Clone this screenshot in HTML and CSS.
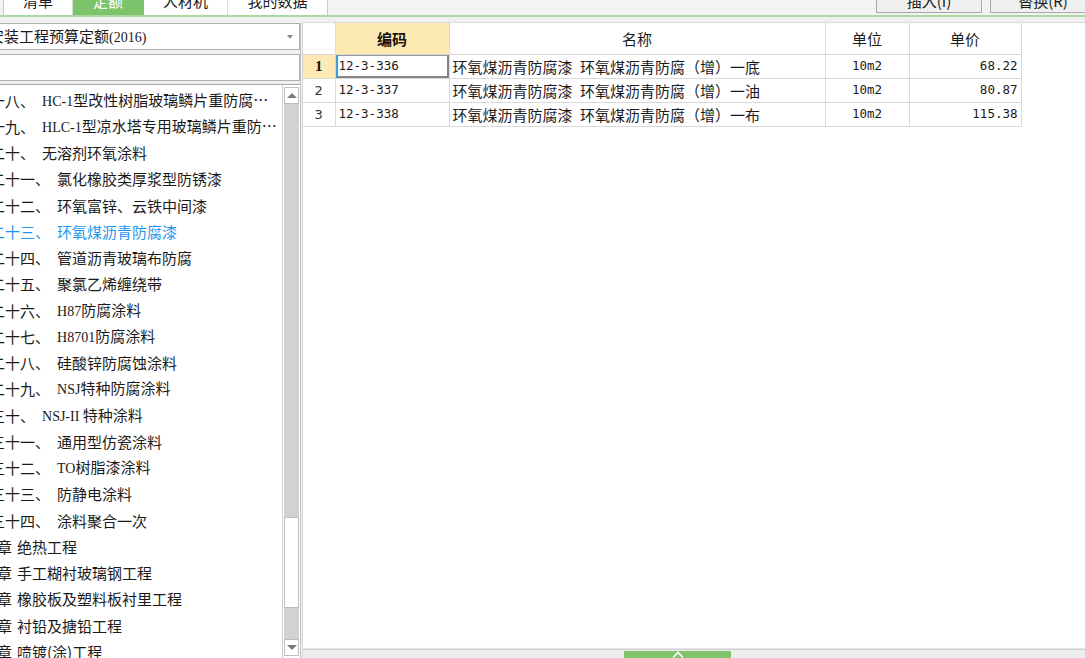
FILE: index.html
```html
<!DOCTYPE html>
<html lang="zh">
<head>
<meta charset="utf-8">
<title>定额</title>
<link rel="stylesheet" href="styles.css">
</head>
<body>
<div class="app">
  <div class="topbar">
    <div class="tabs">
      <div class="tab t1">清单</div>
      <div class="tab t2 active">定额</div>
      <div class="tab t3">人材机</div>
      <div class="tab t4">我的数据</div>
    </div>
    <div class="actions">
      <button class="btn">插入(I)</button>
      <button class="btn">替换(R)</button>
    </div>
  </div>
  <div class="main">
    <div class="left">
      <div class="combo"><span class="combo-text">安装工程预算定额<span class="lat">(2016)</span></span><span class="caret"></span></div>
      <div class="search"></div>
      <div class="tree">
        <div class="tree-list">
          <div class="tree-scroll">
            <div class="node sub"><span class="no">十八、</span><span class="nm"><span class="lat">HC-1</span>型改性树脂玻璃鳞片重防腐…</span></div>
            <div class="node sub"><span class="no">十九、</span><span class="nm"><span class="lat">HLC-1</span>型凉水塔专用玻璃鳞片重防…</span></div>
            <div class="node sub"><span class="no">二十、</span><span class="nm">无溶剂环氧涂料</span></div>
            <div class="node sub"><span class="no">二十一、</span><span class="nm">氯化橡胶类厚浆型防锈漆</span></div>
            <div class="node sub"><span class="no">二十二、</span><span class="nm">环氧富锌、云铁中间漆</span></div>
            <div class="node sub current"><span class="no">二十三、</span><span class="nm">环氧煤沥青防腐漆</span></div>
            <div class="node sub"><span class="no">二十四、</span><span class="nm">管道沥青玻璃布防腐</span></div>
            <div class="node sub"><span class="no">二十五、</span><span class="nm">聚氯乙烯缠绕带</span></div>
            <div class="node sub"><span class="no">二十六、</span><span class="nm"><span class="lat">H87</span>防腐涂料</span></div>
            <div class="node sub"><span class="no">二十七、</span><span class="nm"><span class="lat">H8701</span>防腐涂料</span></div>
            <div class="node sub"><span class="no">二十八、</span><span class="nm">硅酸锌防腐蚀涂料</span></div>
            <div class="node sub"><span class="no">二十九、</span><span class="nm"><span class="lat">NSJ</span>特种防腐涂料</span></div>
            <div class="node sub"><span class="no">三十、</span><span class="nm"><span class="lat">NSJ-II</span> 特种涂料</span></div>
            <div class="node sub"><span class="no">三十一、</span><span class="nm">通用型仿瓷涂料</span></div>
            <div class="node sub"><span class="no">三十二、</span><span class="nm"><span class="lat">TO</span>树脂漆涂料</span></div>
            <div class="node sub"><span class="no">三十三、</span><span class="nm">防静电涂料</span></div>
            <div class="node sub"><span class="no">三十四、</span><span class="nm">涂料聚合一次</span></div>
            <div class="node chap"><span class="no">第四章</span><span class="nm">绝热工程</span></div>
            <div class="node chap"><span class="no">第五章</span><span class="nm">手工糊衬玻璃钢工程</span></div>
            <div class="node chap"><span class="no">第六章</span><span class="nm">橡胶板及塑料板衬里工程</span></div>
            <div class="node chap"><span class="no">第七章</span><span class="nm">衬铅及搪铅工程</span></div>
            <div class="node chap"><span class="no">第八章</span><span class="nm">喷镀(涂)工程</span></div>
          </div>
        </div>
        <div class="vscroll">
          <div class="sbtn"><span class="tri up"></span></div>
          <div class="track top"></div>
          <div class="thumb"></div>
          <div class="track rest"></div>
          <div class="sbtn"><span class="tri down"></span></div>
        </div>
      </div>
    </div>
    <div class="right">
      <table class="grid">
        <colgroup>
          <col class="c-no"><col class="c-code"><col class="c-name"><col class="c-unit"><col class="c-price">
        </colgroup>
        <thead>
          <tr>
            <th></th>
            <th class="h-code">编码</th>
            <th>名称</th>
            <th>单位</th>
            <th>单价</th>
          </tr>
        </thead>
        <tbody>
          <tr>
            <td class="no cur">1</td>
            <td class="code sel">12-3-336</td>
            <td class="name">环氧煤沥青防腐漆&ensp;环氧煤沥青防腐（增）一底</td>
            <td class="unit">10m2</td>
            <td class="price">68.22</td>
          </tr>
          <tr>
            <td class="no">2</td>
            <td class="code">12-3-337</td>
            <td class="name">环氧煤沥青防腐漆&ensp;环氧煤沥青防腐（增）一油</td>
            <td class="unit">10m2</td>
            <td class="price">80.87</td>
          </tr>
          <tr>
            <td class="no">3</td>
            <td class="code">12-3-338</td>
            <td class="name">环氧煤沥青防腐漆&ensp;环氧煤沥青防腐（增）一布</td>
            <td class="unit">10m2</td>
            <td class="price">115.38</td>
          </tr>
        </tbody>
      </table>
      <div class="fill"></div>
      <div class="bottombar">
        <div class="handle">
          <svg width="12" height="7" viewBox="0 0 12 7"><path d="M1 6.5 L6 1.5 L11 6.5" fill="none" stroke="#ffffff" stroke-width="1.6"/></svg>
        </div>
      </div>
    </div>
  </div>
</div>
</body>
</html>
```
FILE: styles.css
```css
* { box-sizing: border-box; }
html, body { margin: 0; padding: 0; }
body {
  width: 1085px;
  height: 658px;
  overflow: hidden;
  background: #f0f0f0;
  font-family: "Noto Sans CJK SC", "Noto Sans", sans-serif;
  font-size: 15px;
  color: #1a1a1a;
}
.lat { font-family: "Liberation Serif", serif; font-size: 14px; }

.app { display: flex; flex-direction: column; height: 658px; overflow: hidden; }

/* top bar */
.topbar {
  flex: none;
  display: flex;
  height: 31px;
  margin-top: -14px;
  border-bottom: 2px solid #a9d99e;
  background: #f3f3f3;
  overflow: hidden;
}
.tabs { display: flex; padding-left: 3px; }
.tab {
  height: 29px;
  display: flex;
  align-items: center;
  justify-content: center;
  background: #ffffff;
  border-right: 1px solid #cfe6c8;
  font-size: 15px;
  line-height: 1;
  color: #1a1a1a;
}
.tab.t1 { width: 70px; border-left: 1px solid #a9d99e; }
.tab.t2 { width: 71px; }
.tab.t3 { width: 84px; }
.tab.t4 { width: 100px; border-right-color: #b7dcae; }
.tab.active { background: #7dc36b; color: #ffffff; border-right-color: #7dc36b; }

.actions { margin-left: auto; display: flex; gap: 8px; margin-right: -11px; }
.btn {
  width: 106px;
  height: 26px;
  margin-top: 1px;
  background: #efefef;
  border: 1px solid #a9a9a9;
  font-family: inherit;
  font-size: 15px;
  color: #1a1a1a;
  padding: 0;
  line-height: 1;
}

/* main */
.main { flex: 1; display: flex; min-height: 0; padding-top: 6px; }

.left {
  width: 301px;
  flex: none;
  display: flex;
  flex-direction: column;
  overflow: hidden;
  border-right: 1px solid #c4c4c4;
}
.combo {
  height: 27px;
  margin-left: -40px;
  padding: 0 6px 0 28px;
  background: #ffffff;
  border: 1px solid #b0b0b0;
  display: flex;
  align-items: center;
  justify-content: space-between;
  white-space: nowrap;
  flex: none;
}
.combo-text { line-height: 1; }
.caret {
  width: 0; height: 0;
  border-left: 3px solid transparent;
  border-right: 3px solid transparent;
  border-top: 4px solid #8a8a8a;
}
.search {
  height: 27px;
  margin-top: 4px;
  margin-left: -40px;
  background: #ffffff;
  border: 1px solid #b0b0b0;
  flex: none;
}

.tree {
  flex: 1;
  min-height: 0;
  margin-top: 3px;
  display: flex;
  background: #ffffff;
  border-top: 1px solid #a8a8a8;
}
.tree-list { flex: 1; overflow: hidden; padding-top: 2px; }
.tree-scroll { margin-left: -43px; }
.node {
  height: 26.25px;
  display: flex;
  align-items: center;
  white-space: nowrap;
  font-size: 15px;
  line-height: 1;
  color: #1a1a1a;
}
.node.sub { padding-left: 33px; gap: 7px; }
.node.chap { padding-left: 10px; gap: 5px; }
.node.current { color: #1e96ee; }

.vscroll {
  width: 18px;
  flex: none;
  display: flex;
  flex-direction: column;
  padding: 2px 1px 2px 1px;
  background: #ffffff;
  border-left: 1px solid #cfcfcf;
}
.sbtn {
  height: 17px;
  flex: none;
  background: #ffffff;
  border: 1px solid #bdbdbd;
  display: flex;
  align-items: center;
  justify-content: center;
}
.tri { width: 0; height: 0; border-left: 5px solid transparent; border-right: 5px solid transparent; }
.tri.up { border-bottom: 5px solid #7a7a7a; }
.tri.down { border-top: 5px solid #7a7a7a; }
.track { background: #d2d2d2; }
.track.top { height: 413px; flex: none; }
.track.rest { flex: 1; }
.thumb { height: 91px; flex: none; background: #ffffff; border: 1px solid #bdbdbd; }

/* right panel */
.right {
  flex: 1;
  min-width: 0;
  margin-left: 1px;
  margin-top: -1px;
  display: flex;
  flex-direction: column;
  background: #ffffff;
  border-top: 1px solid #dcdcdc;
  border-left: 1px solid #d6d6d6;
}
.grid {
  border-collapse: collapse;
  table-layout: fixed;
  width: 718px;
  flex: none;
}
.c-no { width: 32px; }
.c-code { width: 114px; }
.c-name { width: 376px; }
.c-unit { width: 84px; }
.c-price { width: 112px; }
.grid th, .grid td {
  border: 1px solid #d9d9d9;
  padding: 0;
  white-space: nowrap;
  overflow: hidden;
  line-height: 1;
}
.grid tr > :first-child { border-left: none; }
.grid thead tr > * { border-top: none; }
.grid th {
  height: 31px;
  font-weight: normal;
  font-size: 15px;
  text-align: center;
  background: #ffffff;
}
.grid th.h-code { background: #fde9b2; font-weight: bold; color: #111; }
.grid td { height: 24px; font-size: 15px; }
.grid td.no { text-align: center; font-family: "DejaVu Sans", sans-serif; font-size: 13px; color: #333; }
.grid td.no.cur { background: #fde9b4; font-family: "Liberation Serif", serif; font-weight: bold; font-size: 15px; color: #111; }
.grid td.code { padding-left: 3px; font-family: "DejaVu Sans Mono", monospace; font-size: 12.5px; }
.grid td.code.sel { box-shadow: inset 2px 0 0 #3a9de0, inset -2px -2px 0 #858585, inset 0 1px 0 #9a9a9a; }
.grid td.name { padding-left: 3px; }
.grid td.unit { text-align: center; font-family: "DejaVu Sans Mono", monospace; font-size: 12.5px; }
.grid td.price { text-align: right; padding-right: 3px; font-family: "DejaVu Sans Mono", monospace; font-size: 12.5px; }

.fill { flex: 1; }
.bottombar {
  flex: none;
  height: 9px;
  background: #eeeeee;
  border-top: 1px solid #d2d2d2;
  box-shadow: 0 -1px 1px #e4e4e4;
  display: flex;
  align-items: flex-end;
  padding-left: 321px;
}
.handle {
  width: 107px;
  height: 7px;
  background: #82c46c;
  display: flex;
  justify-content: center;
  align-items: flex-start;
  overflow: hidden;
}
.handle svg { display: block; }
```
